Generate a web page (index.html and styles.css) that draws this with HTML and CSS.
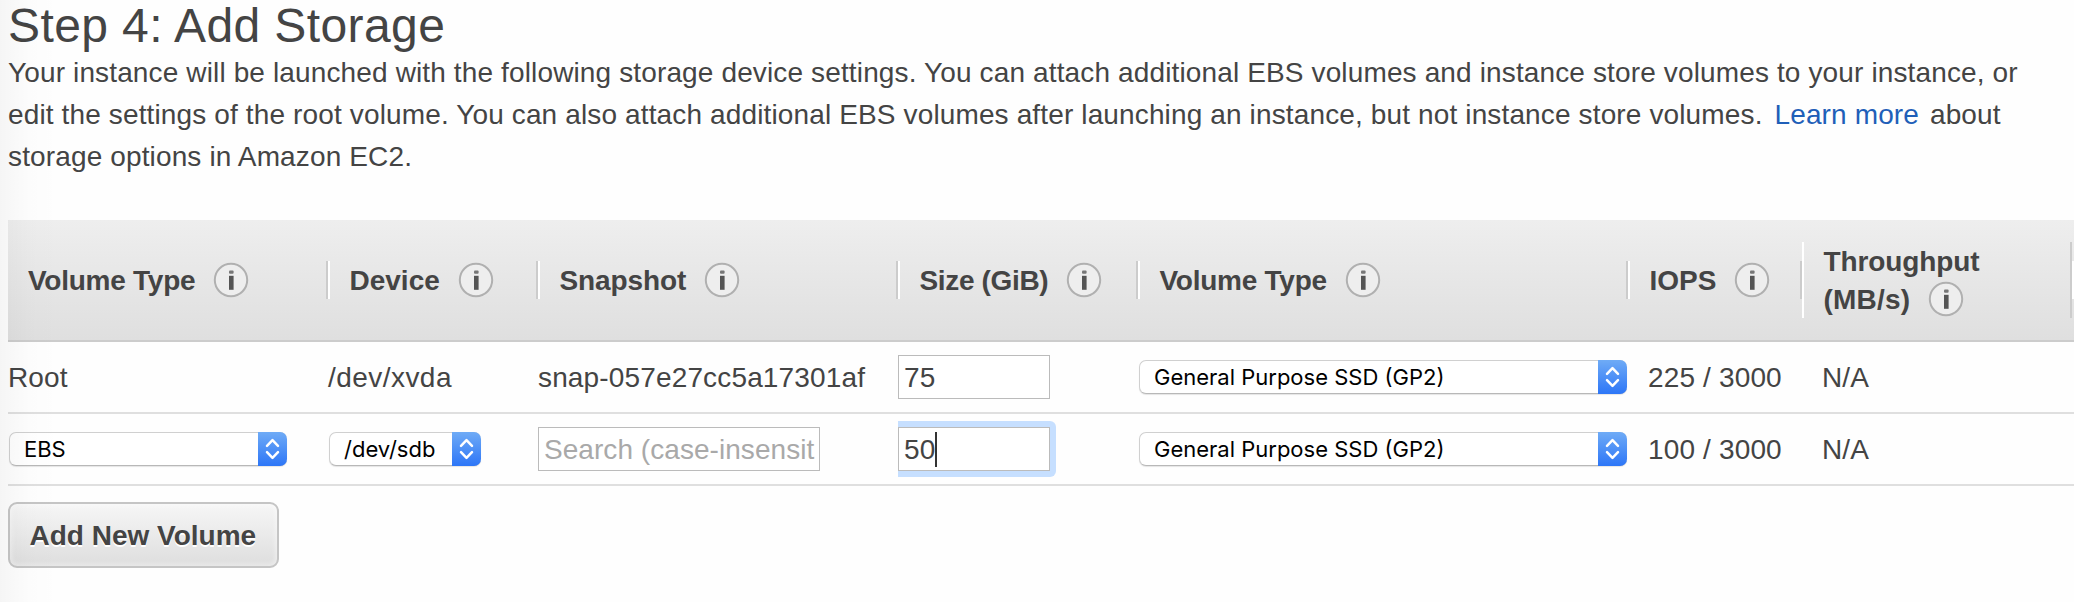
FILE: index.html
```
<!DOCTYPE html>
<html lang="en">
<head>
<meta charset="utf-8">
<title>Step 4: Add Storage</title>
<link rel="stylesheet" href="styles.css">
</head>
<body>
<svg class="defs" width="0" height="0">
  <symbol id="info" viewBox="0 0 36 36">
    <circle cx="18" cy="18" r="16.2" fill="#eee" stroke="#b0b0b0" stroke-width="2"/>
    <rect x="16" y="8.4" width="4.6" height="3.4" rx="1" fill="#777"/>
    <path d="M16 13.8h4.6v14h-4.6z" fill="#555"/>
  </symbol>
  <symbol id="updown" viewBox="0 0 29 34">
    <path d="M9 13.8l5.5-5.6 5.5 5.6M9 20.2l5.5 5.6 5.5-5.6" fill="none" stroke="#fff" stroke-width="2.5" stroke-linecap="round" stroke-linejoin="round"/>
  </symbol>
</svg>
<main class="page">
  <h1 class="title">Step 4: Add Storage</h1>
  <p class="intro">
    <span class="line">Your instance will be launched with the following storage device settings. You can attach additional EBS volumes and instance store volumes to your instance, or</span>
    <span class="line">edit the settings of the root volume. You can also attach additional EBS volumes after launching an instance, but not instance store volumes. <a class="link">Learn more</a> about</span>
    <span class="line">storage options in Amazon EC2.</span>
  </p>
  <section class="table">
    <div class="row head">
      <div class="th tight"><span class="lbl">Volume Type</span><svg class="info"><use href="#info"/></svg></div>
      <div class="th"><span class="lbl">Device</span><svg class="info"><use href="#info"/></svg></div>
      <div class="th snapshot"><span class="lbl">Snapshot</span><svg class="info"><use href="#info"/></svg></div>
      <div class="th tighter"><span class="lbl">Size (GiB)</span><svg class="info"><use href="#info"/></svg></div>
      <div class="th tight"><span class="lbl">Volume Type</span><svg class="info"><use href="#info"/></svg></div>
      <div class="th"><span class="lbl">IOPS</span><svg class="info"><use href="#info"/></svg></div>
      <div class="th tall"><div class="line">Throughput</div><div class="second"><span class="lbl">(MB/s)</span><svg class="info"><use href="#info"/></svg></div></div>
      <div class="th"></div>
    </div>
    <div class="row body">
      <div class="td">Root</div>
      <div class="td device">/dev/xvda</div>
      <div class="td">snap-057e27cc5a17301af</div>
      <div class="td field"><div class="input size">75</div></div>
      <div class="td field"><div class="select"><span class="value">General Purpose SSD (GP2)</span><svg class="arrows"><use href="#updown"/></svg></div></div>
      <div class="td num">225 / 3000</div>
      <div class="td num">N/A</div>
    </div>
    <div class="row body">
      <div class="td field"><div class="select type"><span class="value">EBS</span><svg class="arrows"><use href="#updown"/></svg></div></div>
      <div class="td field"><div class="select dev"><span class="value">/dev/sdb</span><svg class="arrows"><use href="#updown"/></svg></div></div>
      <div class="td field"><div class="input search">Search (case-insensit</div></div>
      <div class="td field"><div class="focus"><div class="input size">50<i class="caret"></i></div></div></div>
      <div class="td field"><div class="select"><span class="value">General Purpose SSD (GP2)</span><svg class="arrows"><use href="#updown"/></svg></div></div>
      <div class="td num">100 / 3000</div>
      <div class="td num">N/A</div>
    </div>
  </section>
  <button class="add">Add New Volume</button>
</main>
</body>
</html>
```
FILE: styles.css
```
* { box-sizing: border-box; }
body {
  margin: 0;
  width: 2074px;
  height: 602px;
  overflow: hidden;
  background: #fefefe;
  color: #444;
  font: 28px/42px "Liberation Sans", Arial, sans-serif;
}
.defs { display: block; }
.page {
  position: relative;
  height: 602px;
  padding-left: 8px;
  overflow: hidden;
}
.page::after {
  content: "";
  position: absolute;
  inset: 0 auto 0 0;
  width: 60px;
  background: linear-gradient(to right, rgba(0,0,0,.035), rgba(0,0,0,.008) 30px, rgba(0,0,0,0));
}
.title {
  margin: 0;
  height: 52px;
  font-size: 48px;
  line-height: 51px;
  font-weight: 400;
  letter-spacing: .4px;
  white-space: nowrap;
}
.intro { margin: 0 0 42px; height: 126px; letter-spacing: .135px; }
.line { display: block; white-space: nowrap; }
.link { color: #1f5fb8; margin: 0 3px 0 4px; }
.row {
  display: grid;
  grid-template-columns: 320px 210px 360px 240px 490px 174px 270px 2px;
}
.head {
  height: 122px;
  align-items: center;
  border-bottom: 2px solid #ccc;
  background: linear-gradient(#eee, #dfdfdf);
  font-weight: 700;
}
.th {
  display: flex;
  align-items: center;
  height: 38px;
  line-height: 38px;
  padding-left: 19.5px;
  border-left: 2px solid #fff;
  border-right: 2px solid #ccc;
  white-space: nowrap;
}
.th:first-child { border-left-color: transparent; padding-left: 18px; }
.th:last-child { padding: 0; border-right: 0; }
.lbl { padding-top: 2px; }
.tight { letter-spacing: -.25px; }
.tighter { letter-spacing: -.35px; }
.snapshot { letter-spacing: -.1px; }
.tall { display: block; height: 76px; }
.tall .line { height: 38px; padding-top: 1px; letter-spacing: -.1px; }
.second { display: flex; align-items: center; height: 38px; letter-spacing: .2px; }
.info { flex: none; width: 36px; height: 36px; margin-left: 18px; }
.body { height: 72px; border-bottom: 2px solid #dfdfdf; }
.td {
  display: flex;
  align-items: center;
  height: 70px;
  padding-top: 2px;
  letter-spacing: .15px;
  white-space: nowrap;
}
.device { letter-spacing: .45px; }
.field { padding-top: 0; }
.num { padding-left: 20px; }
.input {
  display: flex;
  align-items: center;
  height: 44px;
  padding: 2px 0 0 5px;
  border: 1px solid #bbb;
  background: #fff;
}
.size { width: 152px; }
.search { width: 282px; color: #a9a9a9; letter-spacing: .05px; }
.focus {
  padding: 6px 6px 6px 0;
  border-radius: 0 6px 6px 0;
  background: #c6dfff;
}
.caret { width: 2px; height: 35px; margin-top: -2px; background: #333; }
.select {
  display: flex;
  align-items: center;
  justify-content: space-between;
  width: 488px;
  height: 34px;
  margin-left: 1px;
  padding-left: 14px;
  border: 1px solid #d0d0d0;
  border-bottom-color: #b8b8b8;
  border-right: 0;
  border-radius: 7px;
  background: #fff;
  box-shadow: 0 1px 1px rgba(0,0,0,.1);
  color: #000;
  font: 22px/32px Inter, sans-serif;
  letter-spacing: 0;
}
.type { width: 278px; }
.dev { width: 152px; }
.arrows {
  flex: none;
  width: 29px;
  height: 34px;
  margin: -1px 0;
  border-radius: 0 7px 7px 0;
  background: linear-gradient(#6fabf6, #2d76f7);
}
.add {
  display: block;
  width: 271px;
  height: 66px;
  margin-top: 16px;
  padding: 2px 0 0 19.5px;
  border: 2px solid #c5c5c5;
  border-radius: 9px;
  background: linear-gradient(#f6f6f6, #dedede);
  box-shadow: inset 0 0 4px 2px rgba(255,255,255,.4);
  color: #444;
  font: 700 28px/60px "Liberation Sans", Arial, sans-serif;
  text-align: left;
  text-shadow: 0 2px 0 #fff;
  white-space: nowrap;
}
```
